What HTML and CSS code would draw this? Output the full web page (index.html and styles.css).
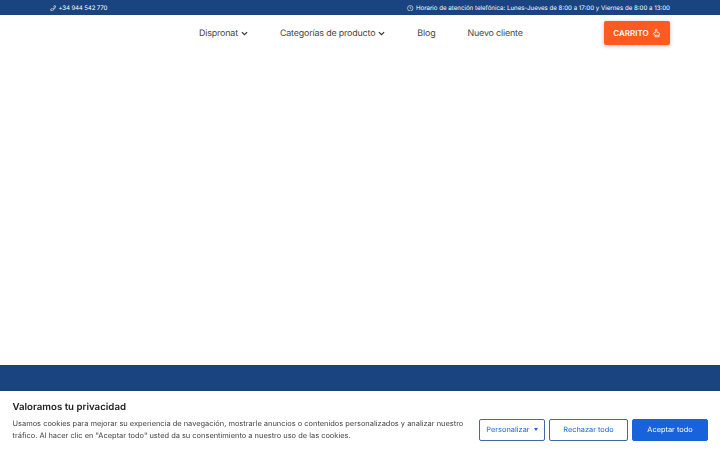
FILE: index.html
```html
<!DOCTYPE html>
<html lang="es">
  <head>
    <meta charset="UTF-8" />
    <title>Dispronat</title>
    <link rel="stylesheet" href="styles.css">
  </head>
  <body>
    <div class="topbar">
      <span class="topbar-item">
        <svg class="topbar-icon" viewBox="0 0 24 24"><path d="M3 21c9 1 17-8 18-17l-5-2-2 6 2 2c-1 2-3 4-5 5l-2-2-6 2z"/></svg>
        <span class="phone">+34 944 542 770</span>
      </span>
      <span class="topbar-item">
        <svg class="topbar-icon" viewBox="0 0 24 24"><circle cx="12" cy="12" r="10"/><path d="M12 6v6l4 2"/></svg>
        Horario de atención telefónica: Lunes-Jueves de 8:00 a 17:00 y Viernes de 8:00 a 13:00
      </span>
    </div>

    <header class="nav">
      <a class="nav-link">Dispronat
        <svg class="chevron" viewBox="0 0 12 8"><path d="M1.5 1.5 6 6l4.5-4.5"/></svg>
      </a>
      <a class="nav-link">Categorías de producto
        <svg class="chevron" viewBox="0 0 12 8"><path d="M1.5 1.5 6 6l4.5-4.5"/></svg>
      </a>
      <a class="nav-link">Blog</a>
      <a class="nav-link">Nuevo cliente</a>
      <a class="cart">CARRITO
        <svg class="cart-icon" viewBox="0 0 24 24"><path d="M9 12V4a2 2 0 0 1 4 0v6l5 1c2 .5 2 2 2 3l-1 4v4H8v-4l-4-4c-1-2 2-4 5-2z"/><path d="M8 18h11"/></svg>
      </a>
    </header>

    <main class="content"></main>

    <footer class="footer"></footer>

    <div class="cookie">
      <h2 class="cookie-title">Valoramos tu privacidad</h2>
      <div class="cookie-row">
        <p class="cookie-text">Usamos cookies para mejorar su experiencia de navegación, mostrarle anuncios o contenidos personalizados y analizar nuestro tráfico. Al hacer clic en "Aceptar todo" usted da su consentimiento a nuestro uso de las cookies.</p>
        <div class="cookie-buttons">
          <button class="btn btn-custom">Personalizar <span class="caret"></span></button>
          <button class="btn btn-reject">Rechazar todo</button>
          <button class="btn btn-accept">Aceptar todo</button>
        </div>
      </div>
    </div>
  </body>
</html>
```

FILE: styles.css
```css
/* Header, empty content, footer band and the cookie notice on top */
html,
body {
  height: 100%;
}
body {
  font-family: "Inter", "Liberation Sans", sans-serif;
  text-rendering: geometricPrecision;
  margin: 0;
  background-color: #ffffff;
  color: #444;
  display: flex;
  flex-direction: column;
  overflow: hidden;
}
.topbar {
  height: 14px;
  padding: 1px 50px 0 50px;
  flex: none;
  background-color: #1a4480;
  color: #ffffff;
  font-size: 6.15px;
  display: flex;
  justify-content: space-between;
  align-items: center;
}
.topbar-item {
  display: flex;
  align-items: center;
  gap: 2px;
}
.phone {
  letter-spacing: -0.15px;
}
.topbar-icon {
  width: 6.5px;
  height: 6.5px;
  fill: none;
  stroke: #ffffff;
  stroke-width: 2.2;
}
.nav {
  height: 35px;
  flex: none;
  display: flex;
  align-items: center;
  padding: 0 50px 0 199px;
  font-size: 8.9px;
  letter-spacing: -0.16px;
}
.nav-link {
  color: #444;
  margin-right: 32px;
  padding-top: 1px;
  display: flex;
  align-items: center;
  gap: 3px;
  white-space: nowrap;
}
.chevron {
  width: 7px;
  height: 5px;
  fill: none;
  stroke: #333;
  stroke-width: 2;
}
.cart {
  margin-left: auto;
  width: 66px;
  height: 24px;
  box-sizing: border-box;
  background-color: #ff5a1f;
  color: #ffffff;
  border-radius: 2px;
  box-shadow: 0 1px 4px rgba(0, 0, 0, 0.25);
  font-size: 8px;
  letter-spacing: 0;
  font-weight: 600;
  display: flex;
  align-items: center;
  justify-content: center;
  gap: 3px;
}
.cart-icon {
  width: 9px;
  height: 10px;
  fill: none;
  stroke: #ffffff;
  stroke-width: 2;
}
.content {
  flex: 1;
}
.footer {
  height: 85px;
  flex: none;
  background-color: #1a4480;
}
.cookie {
  position: fixed;
  left: 0;
  right: 0;
  bottom: 0;
  height: 59px;
  box-sizing: border-box;
  background-color: #ffffff;
  padding: 9.5px 12px 0 12.5px;
  box-shadow: 0 0 4px rgba(0, 0, 0, 0.12);
}
.cookie-title {
  margin: 0 0 4.5px 0;
  font-size: 9.7px;
  line-height: 13px;
  font-weight: 600;
  color: #212121;
}
.cookie-row {
  display: flex;
  justify-content: space-between;
  align-items: flex-start;
}
.cookie-text {
  margin: 0;
  width: 456px;
  font-size: 7.45px;
  line-height: 12px;
  color: #444;
}
.cookie-buttons {
  display: flex;
  gap: 4px;
  margin-top: 0.5px;
}
.btn {
  font-family: inherit;
  font-size: 7.4px;
  text-rendering: geometricPrecision;
  height: 22px;
  box-sizing: border-box;
  border-radius: 2px;
  border: 1.5px solid #3f6aa3;
  background-color: #ffffff;
  color: #1863dc;
  padding: 0;
}
.btn-custom {
  width: 66px;
}
.btn-reject {
  width: 79px;
}
.btn-accept {
  width: 76px;
  background-color: #1863dc;
  border-color: #1863dc;
  color: #ffffff;
}
.caret {
  display: inline-block;
  margin-left: 2px;
  vertical-align: middle;
  border-left: 2.5px solid transparent;
  border-right: 2.5px solid transparent;
  border-top: 3px solid #1863dc;
}
```
